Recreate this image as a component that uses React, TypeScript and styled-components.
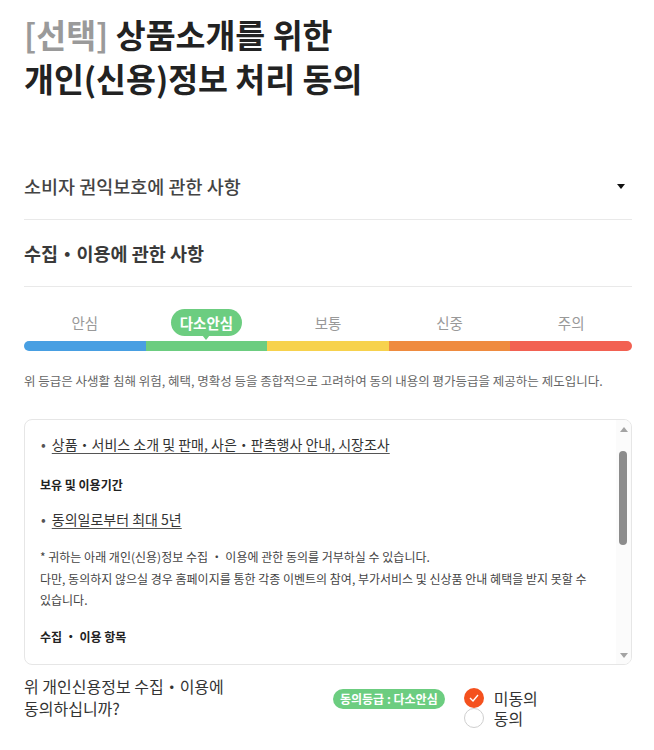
import styled, { createGlobalStyle } from "styled-components";

const GlobalStyle = createGlobalStyle`
  html, body {
    margin: 0;
    padding: 0;
    background: #fff;
  }
  body {
    font-family: "Noto Sans CJK KR", "Noto Sans", sans-serif;
    color: #333;
  }
`;

const Page = styled.div`
  width: 654px;
  padding: 0 22px 0 24px;
  box-sizing: border-box;
`;

const Title = styled.h1`
  margin: 0;
  padding-top: 12px;
  font-size: 32.5px;
  line-height: 44px;
  font-weight: 700;
  color: #222;
`;

const Tag = styled.span`
  color: #9a9a9a;
`;

const Sections = styled.div`
  margin-top: 53px;
`;

const SectionRow = styled.div<{ $strong?: boolean }>`
  height: 66px;
  display: flex;
  align-items: center;
  justify-content: space-between;
  border-bottom: 1px solid #e9e9e9;
  font-size: 18.5px;
  font-weight: ${(p) => (p.$strong ? 700 : 500)};
  color: ${(p) => (p.$strong ? "#3a3a3a" : "#444")};
`;

const Caret = styled.span`
  width: 0;
  height: 0;
  margin-right: 7px;
  border-left: 4px solid transparent;
  border-right: 4px solid transparent;
  border-top: 5px solid #111;
`;

const Grade = styled.div`
  padding-top: 20px;
`;

const GradeLabels = styled.div`
  display: grid;
  grid-template-columns: repeat(5, 1fr);
  height: 30px;
`;

const GradeLabel = styled.div`
  display: flex;
  align-items: center;
  justify-content: center;
  font-size: 14.5px;
  color: #999;
`;

const Bubble = styled.span`
  position: relative;
  height: 27px;
  padding: 0 9px;
  border-radius: 14px;
  background: #6ccd80;
  color: #fff;
  font-size: 14.5px;
  font-weight: 700;
  line-height: 27px;

  &::after {
    content: "";
    position: absolute;
    left: 50%;
    bottom: -4px;
    margin-left: -4px;
    border-left: 4px solid transparent;
    border-right: 4px solid transparent;
    border-top: 5px solid #6ccd80;
  }
`;

const Bar = styled.div`
  margin-top: 4px;
  height: 10px;
  display: grid;
  grid-template-columns: repeat(5, 1fr);
  border-radius: 5px;
  overflow: hidden;
`;

const Segment = styled.div<{ $color: string }>`
  background: ${(p) => p.$color};
`;

const Note = styled.p`
  margin: 21px 0 0;
  font-size: 12.5px;
  line-height: 18px;
  color: #666;
`;

const Box = styled.div`
  position: relative;
  margin-top: 29px;
  height: 246px;
  box-sizing: border-box;
  border: 1px solid #e6e6e6;
  border-radius: 8px;
  overflow: hidden;
`;

const Scroller = styled.div`
  height: 100%;
  box-sizing: border-box;
  overflow-y: scroll;
  scrollbar-width: none;
  padding: 14px 30px 16px 15px;

  &::-webkit-scrollbar {
    display: none;
  }
`;

const Track = styled.div`
  position: absolute;
  top: 0;
  right: 0;
  bottom: 0;
  width: 15px;
  background: #fbfbfb;
`;

const Arrow = styled.span<{ $down?: boolean }>`
  position: absolute;
  left: 4px;
  ${(p) => (p.$down ? "bottom: 6px;" : "top: 7px;")}
  border-left: 4px solid transparent;
  border-right: 4px solid transparent;
  ${(p) => (p.$down ? "border-top" : "border-bottom")}: 5px solid #a3a3a3;
`;

const Thumb = styled.span`
  position: absolute;
  left: 3px;
  top: 31px;
  width: 8px;
  height: 94px;
  border-radius: 4px;
  background: #8c8c8c;
`;

const Bullet = styled.div`
  display: flex;
  gap: 6px;
  font-size: 14px;
  line-height: 20px;
  color: #333;
  padding-left: 1px;

  &::before {
    content: "•";
    color: #555;
  }
`;

const Under = styled.span`
  text-decoration: underline;
  text-underline-offset: 3px;
  text-decoration-color: #555;
`;

const BoxHeading = styled.div<{ $top?: number }>`
  margin-top: ${(p) => p.$top ?? 22}px;
  font-size: 12px;
  line-height: 18px;
  font-weight: 700;
  color: #222;
`;

const BoxText = styled.p`
  margin: 17px 0 0;
  font-size: 12px;
  line-height: 21.5px;
  color: #444;
  word-break: keep-all;
`;

const Gap = styled.div<{ $h: number }>`
  height: ${(p) => p.$h}px;
`;

const Answer = styled.div`
  display: flex;
  align-items: flex-start;
  margin-top: 10px;
  padding-bottom: 30px;
  border-bottom: 1px solid #e9e9e9;
`;

const Question = styled.div`
  width: 220px;
  font-size: 16px;
  line-height: 22px;
  color: #333;
`;

const Badge = styled.span`
  margin: 14px 0 0 89px;
  height: 20px;
  padding: 0 7px;
  border-radius: 10px;
  background: #6ccd80;
  color: #fff;
  font-size: 12px;
  font-weight: 700;
  line-height: 20px;
`;

const Radios = styled.div`
  margin: 13px 0 0 19px;
  display: flex;
  flex-direction: column;
`;

const RadioRow = styled.label`
  display: flex;
  align-items: center;
  gap: 10px;
  height: 20px;
  font-size: 16px;
  color: #333;
`;

const Circle = styled.span<{ $on?: boolean }>`
  width: 20px;
  height: 20px;
  box-sizing: border-box;
  border-radius: 50%;
  display: flex;
  align-items: center;
  justify-content: center;
  background: ${(p) => (p.$on ? "#f4511e" : "#fff")};
  border: ${(p) => (p.$on ? "none" : "1px solid #cfcfcf")};
`;

const grades = ["안심", "다소안심", "보통", "신중", "주의"];
const colors = ["#489fe2", "#6ccd80", "#f7d24d", "#ef8b3f", "#f26152"];

export default function App() {
  return (
    <Page>
      <GlobalStyle />
      <Title>
        <Tag>[선택]</Tag> 상품소개를 위한
        <br />
        개인(신용)정보 처리 동의
      </Title>

      <Sections>
        <SectionRow>
          소비자 권익보호에 관한 사항
          <Caret />
        </SectionRow>
        <SectionRow $strong>수집・이용에 관한 사항</SectionRow>
      </Sections>

      <Grade>
        <GradeLabels>
          {grades.map((g) => (
            <GradeLabel key={g}>{g === "다소안심" ? <Bubble>{g}</Bubble> : g}</GradeLabel>
          ))}
        </GradeLabels>
        <Bar>
          {colors.map((c) => (
            <Segment key={c} $color={c} />
          ))}
        </Bar>
      </Grade>

      <Note>
        위 등급은 사생활 침해 위험, 혜택, 명확성 등을 종합적으로 고려하여 동의 내용의 평가등급을
        제공하는 제도입니다.
      </Note>

      <Box>
        <Scroller>
          <Bullet>
            <Under>상품・서비스 소개 및 판매, 사은・판촉행사 안내, 시장조사</Under>
          </Bullet>
          <BoxHeading>보유 및 이용기간</BoxHeading>
          <Gap $h={15} />
          <Bullet>
            <Under>동의일로부터 최대 5년</Under>
          </Bullet>
          <BoxText>
            * 귀하는 아래 개인(신용)정보 수집 ・ 이용에 관한 동의를 거부하실 수 있습니다.
            <br />
            다만, 동의하지 않으실 경우 홈페이지를 통한 각종 이벤트의 참여, 부가서비스 및 신상품 안내
            혜택을 받지 못할 수 있습니다.
          </BoxText>
          <BoxHeading $top={17}>수집 ・ 이용 항목</BoxHeading>
          <Gap $h={15} />
          <Bullet>
            <Under>성명, 휴대전화번호, 이메일, 주소, 생년월일, 성별</Under>
          </Bullet>
          <BoxHeading>제공받는 자</BoxHeading>
          <Gap $h={15} />
          <Bullet>
            <Under>당사 및 제휴사</Under>
          </Bullet>
          <BoxText>
            * 상품 및 서비스 안내는 문자메시지, 이메일, 전화, 우편 등의 방법으로 제공될 수 있습니다.
          </BoxText>
          <BoxHeading>동의 철회</BoxHeading>
          <BoxText>
            동의하신 이후에도 고객센터 또는 홈페이지를 통해 언제든지 동의를 철회하실 수 있습니다.
          </BoxText>
        </Scroller>
        <Track>
          <Arrow />
          <Thumb />
          <Arrow $down />
        </Track>
      </Box>

      <Answer>
        <Question>
          위 개인신용정보 수집・이용에
          <br />
          동의하십니까?
        </Question>
        <Badge>동의등급 : 다소안심</Badge>
        <Radios>
          <RadioRow>
            <Circle $on>
              <svg width="10" height="8" viewBox="0 0 10 8">
                <path d="M1 4l3 3 5-6" fill="none" stroke="#fff" strokeWidth="1.4" />
              </svg>
            </Circle>
            미동의
          </RadioRow>
          <RadioRow>
            <Circle />
            동의
          </RadioRow>
        </Radios>
      </Answer>
    </Page>
  );
}
